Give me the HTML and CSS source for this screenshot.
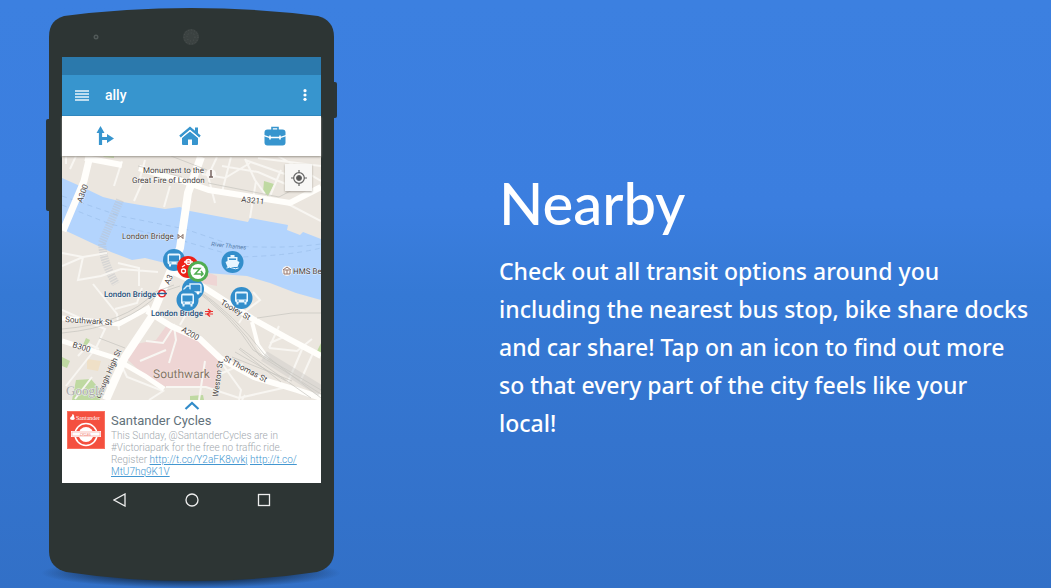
FILE: index.html
```html
<!DOCTYPE html>
<html lang="en">
<head>
<meta charset="utf-8">
<title>Nearby</title>
<link rel="stylesheet" href="styles.css">
</head>
<body>
<main class="feature">
  <section class="phone" aria-label="Ally app preview">
    <svg class="phone-body" viewBox="0 0 291 580" aria-hidden="true">
      <defs><radialGradient id="shadow"><stop offset="0.500" stop-color="#12253d"/><stop offset="1" stop-color="#12253d" stop-opacity="0"/></radialGradient></defs>
      <ellipse cx="145" cy="565" rx="150" ry="15" fill="url(#shadow)" opacity=".8"/>
      <rect x="0" y="111" width="8" height="92" rx="2" fill="#2b3638"/>
      <rect x="283" y="74" width="8" height="36" rx="2" fill="#2b3638"/>
      <path d="M3 29C3 16 9 11 18 8Q80 0 145 0Q211 0 272 8C282 11 288 17 288 29V543C288 555 281 561 271 564Q211 573 145 573Q80 573 20 564C10 561 3 555 3 543Z" fill="#2d3534"/>
      <circle cx="50" cy="29" r="2.500" fill="#515958"/><circle cx="50" cy="29" r="1" fill="#2d3534"/>
      <circle cx="145" cy="29" r="8" fill="#3b4241"/><circle cx="145" cy="29" r="7" fill="none" stroke="#4d5352" stroke-dasharray="1 2"/><circle cx="145" cy="29" r="4" fill="none" stroke="#4d5352" stroke-dasharray="1 2"/>
    </svg>
    <div class="screen">
      <div class="status"></div>
      <header class="appbar">
        <button class="icon-button" aria-label="Menu"><svg width="14" height="11" viewBox="0 0 14 11"><path d="M0 1h14M0 4h14M0 7h14M0 10h14" stroke="#eaf5fb" stroke-width="1.300"/></svg></button>
        <span class="app-name">ally</span>
        <button class="icon-button" aria-label="More"><svg width="4" height="12" viewBox="0 0 4 12" fill="#fff"><circle cx="2" cy="1.700" r="1.600"/><circle cx="2" cy="6" r="1.600"/><circle cx="2" cy="10.300" r="1.600"/></svg></button>
      </header>
      <nav class="tabs">
        <button class="icon-button" aria-label="Directions"><svg width="18" height="20" viewBox="0 0 18 20"><path d="M4.500 19V5M4.500 12.500H12" fill="none" stroke="#3795ce" stroke-width="3.200"/><path d="M0.500 7L4.500 0L8.500 7ZM11 8L18 12.500L11 17Z" fill="#3795ce"/></svg></button>
        <button class="icon-button" aria-label="Home"><svg width="22" height="20" viewBox="0 0 22 20" fill="#3795ce"><path d="M11 5.500L19 12V18Q19 19 18 19H13V13.500H9V19H4Q3 19 3 18V12Z"/><path d="M1 10.500L11 2L21 10.500" fill="none" stroke="#3795ce" stroke-width="2.300"/><path d="M16 1.500H19V8L16 5.500Z"/><path d="M3 11L11 4.500L19 11" fill="none" stroke="#fff" stroke-width=".7"/></svg></button>
        <button class="icon-button" aria-label="Work"><svg width="22" height="20" viewBox="0 0 22 20"><path d="M8 4V1.500H14V4" fill="none" stroke="#3795ce" stroke-width="1.600"/><rect x=".5" y="3.500" width="21" height="16" rx="3" fill="#3795ce"/><path d="M0 9.500L6 11.500H16L22 9.500" fill="none" stroke="#fff" stroke-width="1.300"/><path d="M6 9.500V13.500M16 9.500V13.500" stroke="#fff" stroke-width="1.600"/></svg></button>
      </nav>
      <div class="map">
        <svg class="map-art" viewBox="62 156 259 244" role="img" aria-label="Map of London Bridge">
          <defs>
            <g id="bus"><circle r="11" fill="#338ecb"/><rect x="-6.500" y="-6.500" width="13" height="11" rx="2" fill="#e9f6ff"/><rect x="-5" y="-4.500" width="10" height="6" fill="#338ecb"/><path d="M-4 4V6.500M4 4V6.500" stroke="#e9f6ff" stroke-width="2"/><path d="M-4.500 3H-2.500M2.500 3H4.500" stroke="#338ecb"/></g>
          </defs>
          <rect x="62" y="156" width="259" height="244" fill="#ebe6df"/>
          <g fill="#bfd9a2"><path d="M103 156H114V158L104 157ZM264 181L274 184L268 196L263 192ZM62 357L70 361L67 368L62 366ZM86 338L90 340L86 348L83 345ZM76 380L91 379L102 392L100 400H72ZM321 343L316 353L321 357Z"/><path d="M190 396L203 395L204 400H190Z"/></g>
          <path d="M87 359L101 361L98 371L87 369Z" fill="#efe0c7"/>
          <path d="M167 325L178 326L203 339L218 352L220 361L217 388L166 387L146 377L126 358L136 344L156 340Z" fill="#eed5d4"/>
          <path d="M207 272L217 276V286L201 283Z" fill="#eed5d4"/>
          <path d="M62 178L80 186L103 197L123 202L140 205L165 209L180 207L190 211L248 222L250 218L288 225L287 230L300 235L303 232L321 239V300L296 293L270 283L247 276L206 273L165 263L145 258L132 260L111 252L62 229Z" fill="#b3d4fd"/>
          <g fill="none" stroke="#98bce9" stroke-width=".8" stroke-dasharray="5 4" opacity=".75"><path d="M62 196L120 216L185 229L235 246Q285 249 321 244"/><path d="M62 205L110 224L180 240L238 257Q288 256 321 248"/></g>
          <path d="M120 200L102 243Q103 262 116 284" fill="none" stroke="#bcc2c8" stroke-width="8" stroke-dasharray="1.500 1" opacity=".45"/>
          <g fill="none" stroke="#f8f6f2" stroke-width="2">
            <path d="M66 156V164M76 156L70 169M122 161L114 186M145 160L140 178L165 181M170 186L164 207M142 183L134 201M202 157L195 175M217 157L208 176L215 203M231 157L222 192M245 159L255 180L265 194M202 174L225 178L250 163M222 166L258 172L288 185M258 158L321 166M256 181L250 218M278 156L321 181M270 196L281 170M288 204L321 221M245 160L285 174"/>
            <path d="M62 253L83 257L78 280L101 276L121 269L158 272M62 266L83 257L107 253M118 263L139 268V286M62 310L105 329L96 348L66 386M93 284L117 314L119 330M142 288L137 303L115 309M78 356L89 344L99 349M146 341L163 343L174 326L176 340L169 363M198 293L180 325M120 365L107 387M140 361L166 350M120 362L127 377L163 391L149 400M166 387H206L239 398L283 388M253 292L260 300L247 310L239 323M279 326L269 348M269 348L297 351L312 339M270 343L286 336M303 347L288 382M313 353L300 382M218 358L241 390L239 400M205 361L199 400M220 374L243 364M245 395L242 400M75 399L92 377"/>
          </g>
          <g fill="none" stroke="#fffefb">
            <path d="M90 156L84 181L63 231" stroke-width="7"/><path d="M85 158L122 165M139 168L180 180L209 190L290 203L321 187" stroke-width="6"/>
            <path d="M201 157L188 193L180 248L151 318L125 357L106 400" stroke-width="8"/>
            <path d="M62 318L119 324L150 307M62 341L112 357L145 376L164 389" stroke-width="5"/>
            <path d="M171 271L197 283L253 319L289 339L321 356M147 311L171 326L200 339L220 358L254 377L297 390L321 398" stroke-width="6"/>
            <path d="M252 322L258 345L268 359" stroke-width="4"/>
          </g>
          <g fill="none" stroke="#c6c4bf" stroke-width=".7">
            <path d="M62 329Q125 324 155 292L174 285M62 333Q128 327 159 293L180 286M187 284Q233 317 253 350L321 390M190 285Q238 319 259 355L321 394M194 287Q235 315 264 354L321 398M240 348L311 398M232 357L292 381M235 352L286 381M239 349L281 382"/>
            <path d="M138 166L182 177M208 183L279 197L300 186M257 318L292 313L321 313M99 338L125 348M171 156L207 170"/>
          </g>
          <path d="M264 356L321 391" stroke="#cdcbc7" stroke-width="11" opacity=".45"/>
          <g class="label">
            <text x="143" y="173">Monument to the</text><text x="132" y="183">Great Fire of London</text>
            <text x="122" y="239">London Bridge</text><text x="241" y="202" transform="rotate(6 241 202)">A3211</text>
            <text x="82" y="203" transform="rotate(-70 82 203)">A300</text>
            <text x="65" y="322" transform="rotate(4 65 322)">Southwark St</text>
            <text x="72" y="347" transform="rotate(17 72 347)">B300</text>
            <text x="181" y="331" transform="rotate(31 181 331)">A200</text>
            <text x="169" y="285" transform="rotate(-65 169 285)">A3</text>
            <text x="220" y="304" transform="rotate(30 220 304)">Tooley St</text>
            <text x="223" y="360" transform="rotate(28 223 360)">St Thomas St</text>
            <text x="218" y="397" transform="rotate(-82 218 397)">Weston St</text>
            <text x="100" y="399" transform="rotate(-66 100 399)">orough High St</text>
            <text x="293" y="274">HMS Be</text>
          </g>
          <text class="label blue" x="104" y="297">London Bridge</text><text class="label blue" x="151" y="316">London Bridge</text>
          <text class="label river" x="211" y="246" transform="rotate(6 211 246)">River Thames</text>
          <text class="district" x="153" y="378">Southwark</text><text class="google" x="66" y="395">Google</text>
          <circle cx="211" cy="174" r="5" fill="#faf8f5"/><path d="M211 170V177M209 177H213" stroke="#776460" stroke-width="1.500"/>
          <path d="M178 234V239M183 234V239M178 235L183 238M183 235L178 238" stroke="#8b766f"/>
          <circle cx="287" cy="271" r="5" fill="#faf8f5"/><path d="M283 270L287 267L291 270ZM284 271V274H290V271M287 270V274" fill="none" stroke="#987871"/>
          <circle cx="162" cy="293.500" r="3.300" fill="#fff" stroke="#e32e31" stroke-width="1.500"/><path d="M157 293.500H167" stroke="#275d93" stroke-width="1.500"/>
          <path d="M205 311.500H213M205 314H213M208 309L211 311.500L207 314L210 316.500" fill="none" stroke="#ed3030" stroke-width="1.200"/>
          <use href="#bus" x="174" y="260"/>
          <circle cx="188" cy="267" r="11" fill="#ed2118"/><g fill="none" stroke="#fff" stroke-width="1.300"><circle cx="188.500" cy="262" r="2.500"/><path d="M184 262H193M182 267L185 265"/><circle cx="183.500" cy="271" r="2"/></g>
          <g transform="translate(193 289)"><circle r="11" fill="#338ecb"/><path d="M-3-5H6Q8-5 8-3V3H-3ZM-3-3H-6L-9 0V3H-3" fill="none" stroke="#d9f0ff" stroke-width="1.400"/><circle cx="-6" cy="4" r="1.500" fill="#fff"/><circle cx="5" cy="4" r="1.500" fill="#fff"/></g>
          <use href="#bus" x="187.500" y="300"/><use href="#bus" x="241.500" y="298"/>
          <circle cx="198" cy="271.500" r="10.500" fill="#50ad51"/><circle cx="198" cy="271.500" r="7.500" fill="#fff"/><path d="M193 268.500H200L195 274H203M201 271L203 274L201 276" fill="none" stroke="#50ad51" stroke-width="1.500"/>
          <g transform="translate(232.500 262)"><circle r="11" fill="#338ecb"/><path d="M-2-7H2V-5H5V-1L7 0L5 5H-5L-7 0L-5-1V-5H-2Z" fill="#e9f6ff"/><path d="M-3.500-2.800H3.500" stroke="#338ecb" stroke-width="1.500"/><path d="M-6 6Q-3 4.500 0 6Q3 7.500 6 6" fill="none" stroke="#e9f6ff"/></g>
        </svg>
        <button class="locate" aria-label="My location"><svg width="16" height="16" viewBox="0 0 16 16" fill="none" stroke="#666"><circle cx="8" cy="8" r="5.300" stroke-width="1.200"/><circle cx="8" cy="8" r="2.500" fill="#555"/><path d="M8 0V3M8 13V16M0 8H3M13 8H16" stroke-width="1.200"/></svg></button>
      </div>
      <article class="card">
        <svg class="chevron" width="16" height="9" viewBox="0 0 16 9" aria-hidden="true"><path d="M1.500 8L8 2L14.500 8" fill="none" stroke="#318bc9" stroke-width="2.200"/></svg>
        <svg class="brand" width="38" height="38" viewBox="0 0 38 38" role="img" aria-label="Santander Cycles">
          <rect width="38" height="38" fill="#f4503f"/><rect x=".5" y=".5" width="37" height="37" fill="none" stroke="#ff9283" stroke-dasharray="1 1"/>
          <path d="M3 8Q3 6 5 5Q5 3 6 3Q8 5 7 6Q9 8 6 9Q4 9 3 8Z" fill="#fff"/><text x="9" y="9">Santander</text>
          <circle cx="19" cy="23.500" r="11" fill="none" stroke="#fff" stroke-width="1.500"/><circle cx="19" cy="23.500" r="7.500" fill="#fff"/><rect x="4" y="20" width="30" height="6" fill="#fff"/><rect x="5" y="21" width="28" height="4" fill="none" stroke="#f8a398" stroke-width=".7"/><text class="brand-small" x="13" y="24.500">CYCLES</text>
        </svg>
        <div class="card-copy">
          <h2>Santander Cycles</h2>
          <p>This Sunday, @SantanderCycles are in #Victoriapark for the free no traffic ride. Register <a href="#">http://t.co/Y2aFK8vvkj</a> <a href="#">http://t.co/<wbr>MtU7hq9K1V</a></p>
        </div>
      </article>
    </div>
    <div class="navkeys">
      <button class="icon-button" aria-label="Back"><svg width="14" height="14" viewBox="0 0 14 14"><path d="M12 1V13L1 7Z" fill="none" stroke="#eee" stroke-width="1.300"/></svg></button>
      <button class="icon-button" aria-label="Home screen"><svg width="14" height="14" viewBox="0 0 14 14"><circle cx="7" cy="7" r="6" fill="none" stroke="#eee" stroke-width="1.300"/></svg></button>
      <button class="icon-button" aria-label="Recent apps"><svg width="14" height="14" viewBox="0 0 14 14"><rect x="1.500" y="1.500" width="11" height="11" fill="none" stroke="#eee" stroke-width="1.300"/></svg></button>
    </div>
  </section>
  <section class="copy">
    <h1>Nearby</h1>
    <p>Check out all transit options around you including the nearest bus stop, bike share docks and car share! Tap on an icon to find out more so that every part of the city feels like your<br>local!</p>
  </section>
</main>
</body>
</html>
```
FILE: styles.css
```css
* { box-sizing: border-box; }
body { margin: 0; font-family: Roboto, "Liberation Sans", sans-serif; }
h1, h2, p { margin: 0; }
.feature {
  min-height: 100vh;
  display: grid;
  grid-template-columns: 291px minmax(0, 1fr);
  column-gap: 162px;
  align-items: start;
  padding: 8px 16px 0 46px;
  overflow: hidden;
  background: linear-gradient(#3c80e0 0%, #3b7edf 35%, #3579d5 50%, #3474ce 75%, #3270c7 100%);
}
.phone { position: relative; padding: 49px 16px 63px; }
.phone-body { position: absolute; inset: 0; width: 100%; overflow: visible; }
.screen { position: relative; background: #fff; }
.icon-button {
  display: flex; align-items: center; justify-content: center;
  padding: 0; border: 0; background: none;
}
.status { height: 18px; background: #2b79ac; }
.appbar {
  height: 41px; display: flex; align-items: center; gap: 16px;
  padding: 0 14px 0 13px;
  background: #3795ce; border-bottom: 1px solid #2887c2;
  color: #fff;
}
.app-name { flex: 1; font-size: 14px; font-weight: 500; }
.tabs {
  position: relative; z-index: 1;
  height: 40px; display: grid; grid-template-columns: repeat(3, 1fr);
  padding-right: 4px;
  background: #fff; box-shadow: 0 1px 2px #99948c;
}
.map { position: relative; overflow: hidden; }
.map-art { display: block; width: 100%; text-rendering: geometricPrecision; }
.label { font-size: 8px; fill: #49443f; stroke: #fff; stroke-width: 1px; paint-order: stroke; stroke-opacity: .7; }
.blue { fill: #244e78; font-weight: 500; }
.river { font-size: 6px; fill: #537ba8; stroke: none; font-style: italic; }
.district { font-size: 12px; fill: #857567; stroke: #f6e9e5; stroke-width: 1px; paint-order: stroke; }
.google { font-family: "Liberation Serif", serif; font-size: 13px; fill: #aaa; stroke: #eee; stroke-width: 1px; paint-order: stroke; }
.locate {
  position: absolute; top: 8px; right: 9px; width: 27px; height: 27px;
  display: flex; align-items: center; justify-content: center;
  padding: 0; border: 0; background: #f8f7f5; box-shadow: 0 1px 2px #aaa59d;
}
.card {
  position: relative;
  display: grid; grid-template-columns: 38px minmax(0, 1fr); column-gap: 6px;
  align-items: start;
  padding: 11px 14px 5px 5px;
}
.chevron { position: absolute; top: 1px; left: calc(50% - 8px); }
.brand text { font-family: "Liberation Serif", serif; font-size: 6px; fill: #fff; }
.brand .brand-small { font-family: Roboto, sans-serif; font-size: 3px; fill: #ee6254; }
.card-copy { padding-top: 1px; }
.card h2 { font-size: 13px; line-height: 18px; font-weight: 400; color: #62717a; }
.card p { font-size: 10px; line-height: 12px; font-weight: 300; color: #a1a8ae; }
.card a { color: #4296d0; }
.navkeys {
  position: relative; height: 34px;
  display: grid; grid-template-columns: repeat(3, 72px); justify-content: center;
}
.copy { padding-top: 159px; color: #fff; }
.copy h1 { font: 500 58px/72px Lato, sans-serif; }
.copy p { margin-top: 13px; font: 500 23px/38px "Noto Sans", sans-serif; }
```
